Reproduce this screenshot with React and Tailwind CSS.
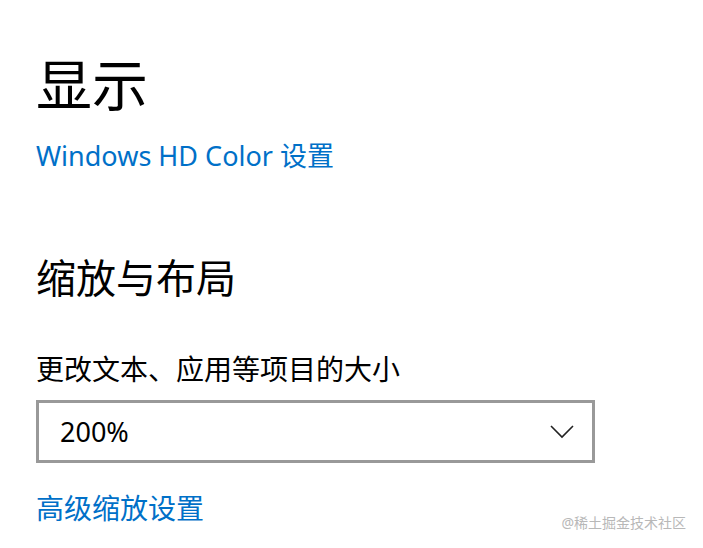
export default function App() {
  const font = { fontFamily: '"Noto Sans", "Noto Sans CJK SC", sans-serif' };
  return (
    <div className="relative w-[703px] h-[548px] bg-white overflow-hidden" style={font}>
      <div className="flex flex-col pl-[36px] pt-[46px]">
        <h1 className="text-[56px] leading-[76px] text-black font-normal">显示</h1>
        <a className="mt-[16px] text-[27px] leading-[36px] text-[#0070c8]">Windows HD Color 设置</a>
        <h2 className="mt-[76px] text-[40px] leading-[56px] text-black font-normal">缩放与布局</h2>
        <div className="mt-[44px] text-[28px] leading-[38px] text-black">更改文本、应用等项目的大小</div>
        <div className="mt-[12px] w-[559px] h-[63px] border-[3px] border-[#999999] flex items-center justify-between pl-[21px] pr-[18px]">
          <span className="text-[27px] leading-[36px] text-black">200%</span>
          <svg width="24" height="14" viewBox="0 0 24 14" fill="none" stroke="#222" strokeWidth="1.6">
            <path d="M1 1 L12 12 L23 1" />
          </svg>
        </div>
        <a className="mt-[26px] text-[28px] leading-[38px] text-[#0070c8]">高级缩放设置</a>
      </div>
      <div className="absolute right-[17px] bottom-[16px] text-[14px] leading-[18px] text-[#b8b8b8]">@稀土掘金技术社区</div>
    </div>
  );
}
